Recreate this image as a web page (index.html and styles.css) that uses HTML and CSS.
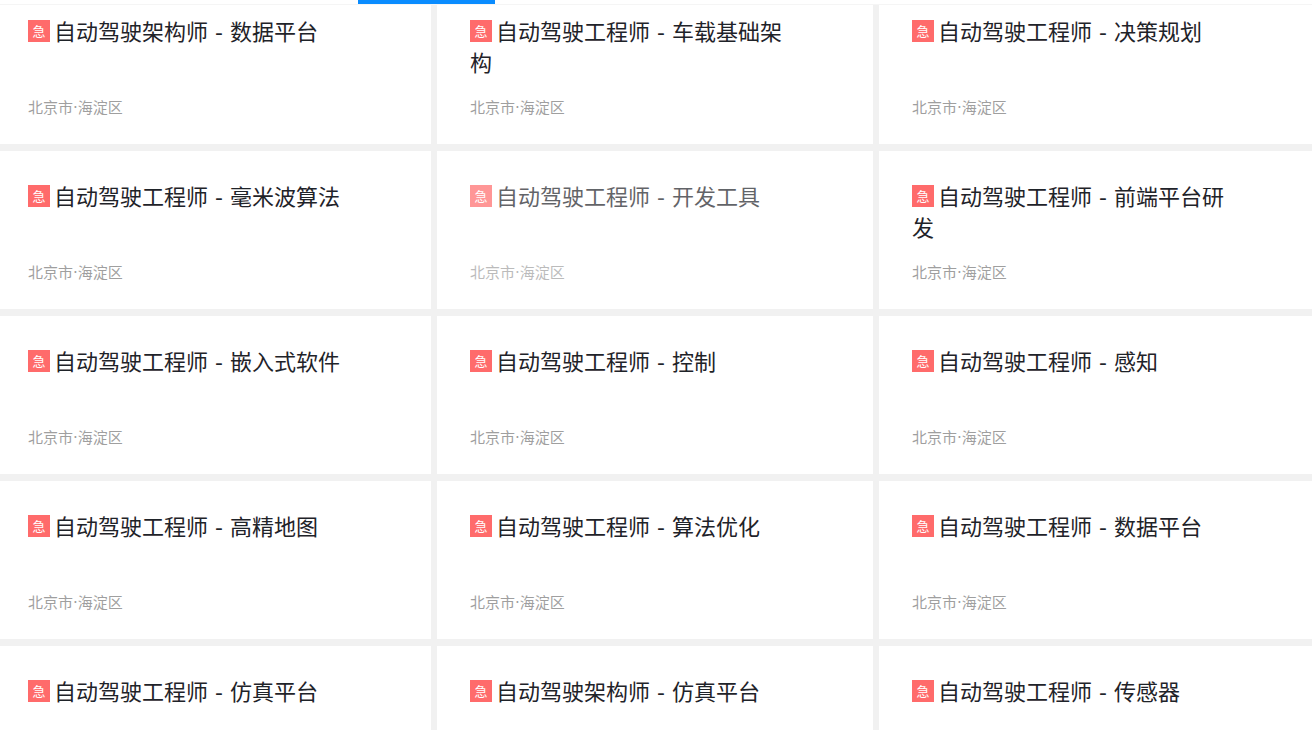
FILE: index.html
```html
<!DOCTYPE html>
<html lang="zh-CN">
	<head>
		<meta charset="utf-8">
		<title>职位列表</title>
		<link rel="stylesheet" href="styles.css">
	</head>
	<body>
		<header class="tabs"><div class="tab-line"></div></header>
		<main class="jobs">
			<a class="job" href="#">
				<h3 class="title"><span class="urgent">急</span>自动驾驶架构师 - 数据平台</h3>
				<p class="place">北京市·海淀区</p>
			</a>
			<a class="job" href="#">
				<h3 class="title"><span class="urgent">急</span>自动驾驶工程师 - 车载基础架构</h3>
				<p class="place">北京市·海淀区</p>
			</a>
			<a class="job" href="#">
				<h3 class="title"><span class="urgent">急</span>自动驾驶工程师 - 决策规划</h3>
				<p class="place">北京市·海淀区</p>
			</a>
			<a class="job" href="#">
				<h3 class="title"><span class="urgent">急</span>自动驾驶工程师 - 毫米波算法</h3>
				<p class="place">北京市·海淀区</p>
			</a>
			<a class="job active" href="#">
				<h3 class="title"><span class="urgent">急</span>自动驾驶工程师 - 开发工具</h3>
				<p class="place">北京市·海淀区</p>
			</a>
			<a class="job" href="#">
				<h3 class="title"><span class="urgent">急</span>自动驾驶工程师 - 前端平台研发</h3>
				<p class="place">北京市·海淀区</p>
			</a>
			<a class="job" href="#">
				<h3 class="title"><span class="urgent">急</span>自动驾驶工程师 - 嵌入式软件</h3>
				<p class="place">北京市·海淀区</p>
			</a>
			<a class="job" href="#">
				<h3 class="title"><span class="urgent">急</span>自动驾驶工程师 - 控制</h3>
				<p class="place">北京市·海淀区</p>
			</a>
			<a class="job" href="#">
				<h3 class="title"><span class="urgent">急</span>自动驾驶工程师 - 感知</h3>
				<p class="place">北京市·海淀区</p>
			</a>
			<a class="job" href="#">
				<h3 class="title"><span class="urgent">急</span>自动驾驶工程师 - 高精地图</h3>
				<p class="place">北京市·海淀区</p>
			</a>
			<a class="job" href="#">
				<h3 class="title"><span class="urgent">急</span>自动驾驶工程师 - 算法优化</h3>
				<p class="place">北京市·海淀区</p>
			</a>
			<a class="job" href="#">
				<h3 class="title"><span class="urgent">急</span>自动驾驶工程师 - 数据平台</h3>
				<p class="place">北京市·海淀区</p>
			</a>
			<a class="job" href="#">
				<h3 class="title"><span class="urgent">急</span>自动驾驶工程师 - 仿真平台</h3>
			</a>
			<a class="job" href="#">
				<h3 class="title"><span class="urgent">急</span>自动驾驶架构师 - 仿真平台</h3>
			</a>
			<a class="job" href="#">
				<h3 class="title"><span class="urgent">急</span>自动驾驶工程师 - 传感器</h3>
			</a>
		</main>
	</body>
</html>
```
FILE: styles.css
```css
body{
	margin:0;
	height:100vh;
	overflow:hidden;
	background-color:#f1f1f1;
	font-family:"DejaVu Sans", "Noto Sans CJK SC", sans-serif;
}
.tabs{
	position:sticky;
	top:0;
	z-index:1;
	padding-left:358px;
	background-color:#fff;
	border-bottom:1px solid #f5f5f5;
}
.tab-line{
	width:137px;
	height:4px;
	background-color:#0a8cff;
}
/* the list runs under the tabs and a little past both sides */
.jobs{
	display:grid;
	grid-template-columns:repeat(3, 1fr);
	gap:7px 6px;
	margin:-19px -3px 0 -5px;
}
.job{
	padding:31px 33px 25px;
	background-color:#fff;
	color:#1f2329;
	text-decoration:none;
}
.title{
	max-width:320px;
	min-height:62px;
	margin:0;
	font-size:22px;
	font-weight:400;
	line-height:31px;
}
.urgent{
	display:inline-block;
	width:22px;
	height:22px;
	margin:3px 4px 0 0;
	background-color:#ff6b6b;
	color:#fff;
	font-size:13px;
	line-height:24px;
	text-align:center;
	vertical-align:top;
}
.place{
	margin:19px 0 0;
	color:#9f9f9f;
	font-size:15px;
	line-height:21px;
}
.active .title, .active .place{
	opacity:0.7;
}
```
